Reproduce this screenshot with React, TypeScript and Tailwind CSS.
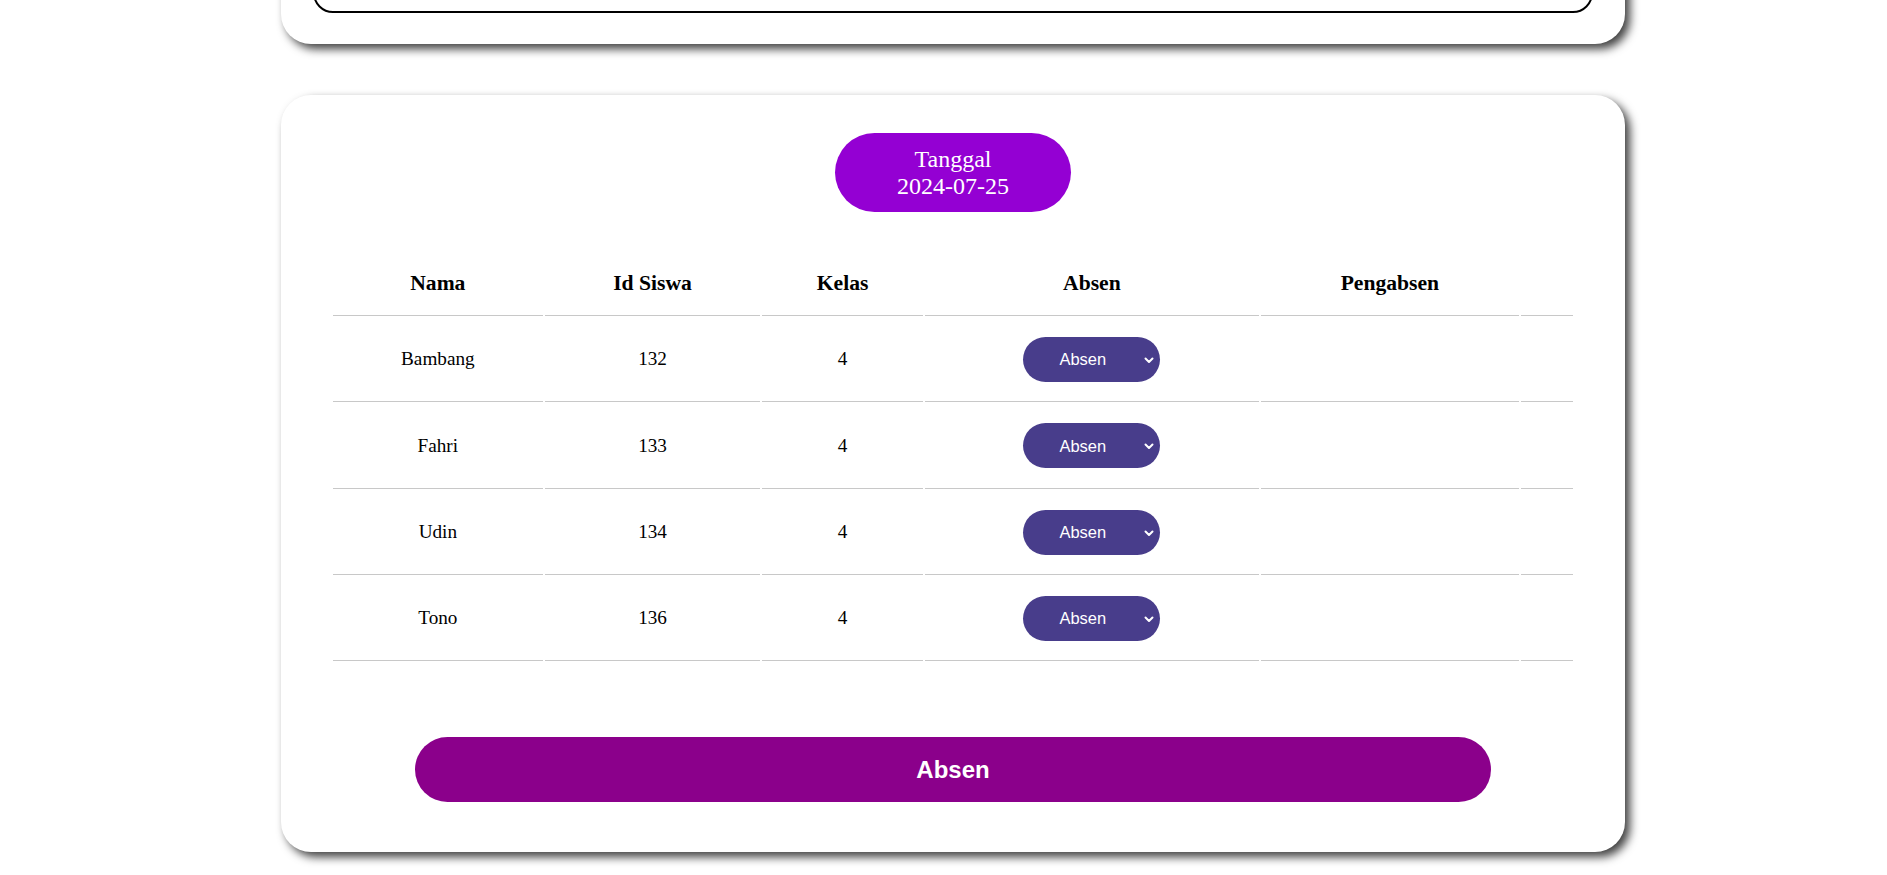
const students = [
  { nama: "Bambang", id: "132", kelas: "4" },
  { nama: "Fahri", id: "133", kelas: "4" },
  { nama: "Udin", id: "134", kelas: "4" },
  { nama: "Tono", id: "136", kelas: "4" },
];

function AbsenSelect() {
  return (
    <div className="relative inline-block">
      <select className="h-[45px] w-[137px] appearance-none rounded-full bg-[#483d8b] pl-[36px] pr-6 text-left text-[16.5px] text-white outline-none font-['Liberation_Sans',Arial,sans-serif]">
        <option>Absen</option>
        <option>Hadir</option>
        <option>Izin</option>
        <option>Sakit</option>
      </select>
      <svg
        className="pointer-events-none absolute right-[6px] top-[20px]"
        width="10"
        height="7"
        viewBox="0 0 10 7"
        fill="none"
      >
        <polyline points="1.5,1.5 5,5 8.5,1.5" stroke="white" strokeWidth="2" strokeLinecap="round" strokeLinejoin="round" />
      </svg>
    </div>
  );
}

export default function App() {
  return (
    <div className="min-h-screen overflow-hidden bg-white pb-10 font-['Liberation_Serif','Times_New_Roman',serif] text-black">
      <div className="ml-[281px] w-[1344px]">
        {/* top card, scrolled mostly out of view */}
        <div className="-mt-[300px] rounded-[30px] bg-white px-[32px] pb-[31px] pt-8 shadow-[5px_5px_10px_rgba(0,0,0,0.75)]">
          <div className="h-[281px] rounded-[20px] border-2 border-black" />
        </div>

        <div className="mt-[51px] rounded-[30px] bg-white pb-[50px] pt-[38px] shadow-[5px_5px_10px_rgba(0,0,0,0.75)]">
          <div className="flex justify-center">
            <div className="flex h-[79px] w-[236px] flex-col items-center justify-center rounded-full bg-[#9400d3] text-[24px] leading-[27px] text-white">
              <span>Tanggal</span>
              <span>2024-07-25</span>
            </div>
          </div>

          <table className="mx-auto mt-[38px] w-[1244px] table-fixed border-separate border-spacing-[2px]">
            <thead>
              <tr className="text-[21.6px] leading-[25px]">
                <th className="w-[209px] border-b border-[#c8c8c8] py-[19px]">Nama</th>
                <th className="w-[215px] border-b border-[#c8c8c8] py-[19px]">Id Siswa</th>
                <th className="w-[160px] border-b border-[#c8c8c8] py-[19px]">Kelas</th>
                <th className="w-[333px] border-b border-[#c8c8c8] py-[19px]">Absen</th>
                <th className="w-[257px] border-b border-[#c8c8c8] py-[19px]">Pengabsen</th>
                <th className="w-[52px] border-b border-[#c8c8c8] py-[19px]"></th>
              </tr>
            </thead>
            <tbody>
              {students.map((s) => (
                <tr key={s.id} className="text-center text-[19.2px]">
                  <td className="h-[84.3px] border-b border-[#c8c8c8]">{s.nama}</td>
                  <td className="border-b border-[#c8c8c8]">{s.id}</td>
                  <td className="border-b border-[#c8c8c8]">{s.kelas}</td>
                  <td className="border-b border-[#c8c8c8] align-middle">
                    <div className="flex justify-center">
                      <AbsenSelect />
                    </div>
                  </td>
                  <td className="border-b border-[#c8c8c8]"></td>
                  <td className="border-b border-[#c8c8c8]"></td>
                </tr>
              ))}
            </tbody>
          </table>

          <div className="mt-[74px] flex justify-center">
            <button className="h-[65px] w-[1076px] rounded-full bg-[#8b008b] text-[24px] font-bold text-white font-['Liberation_Sans',Arial,sans-serif]">
              Absen
            </button>
          </div>
        </div>
      </div>
    </div>
  );
}
